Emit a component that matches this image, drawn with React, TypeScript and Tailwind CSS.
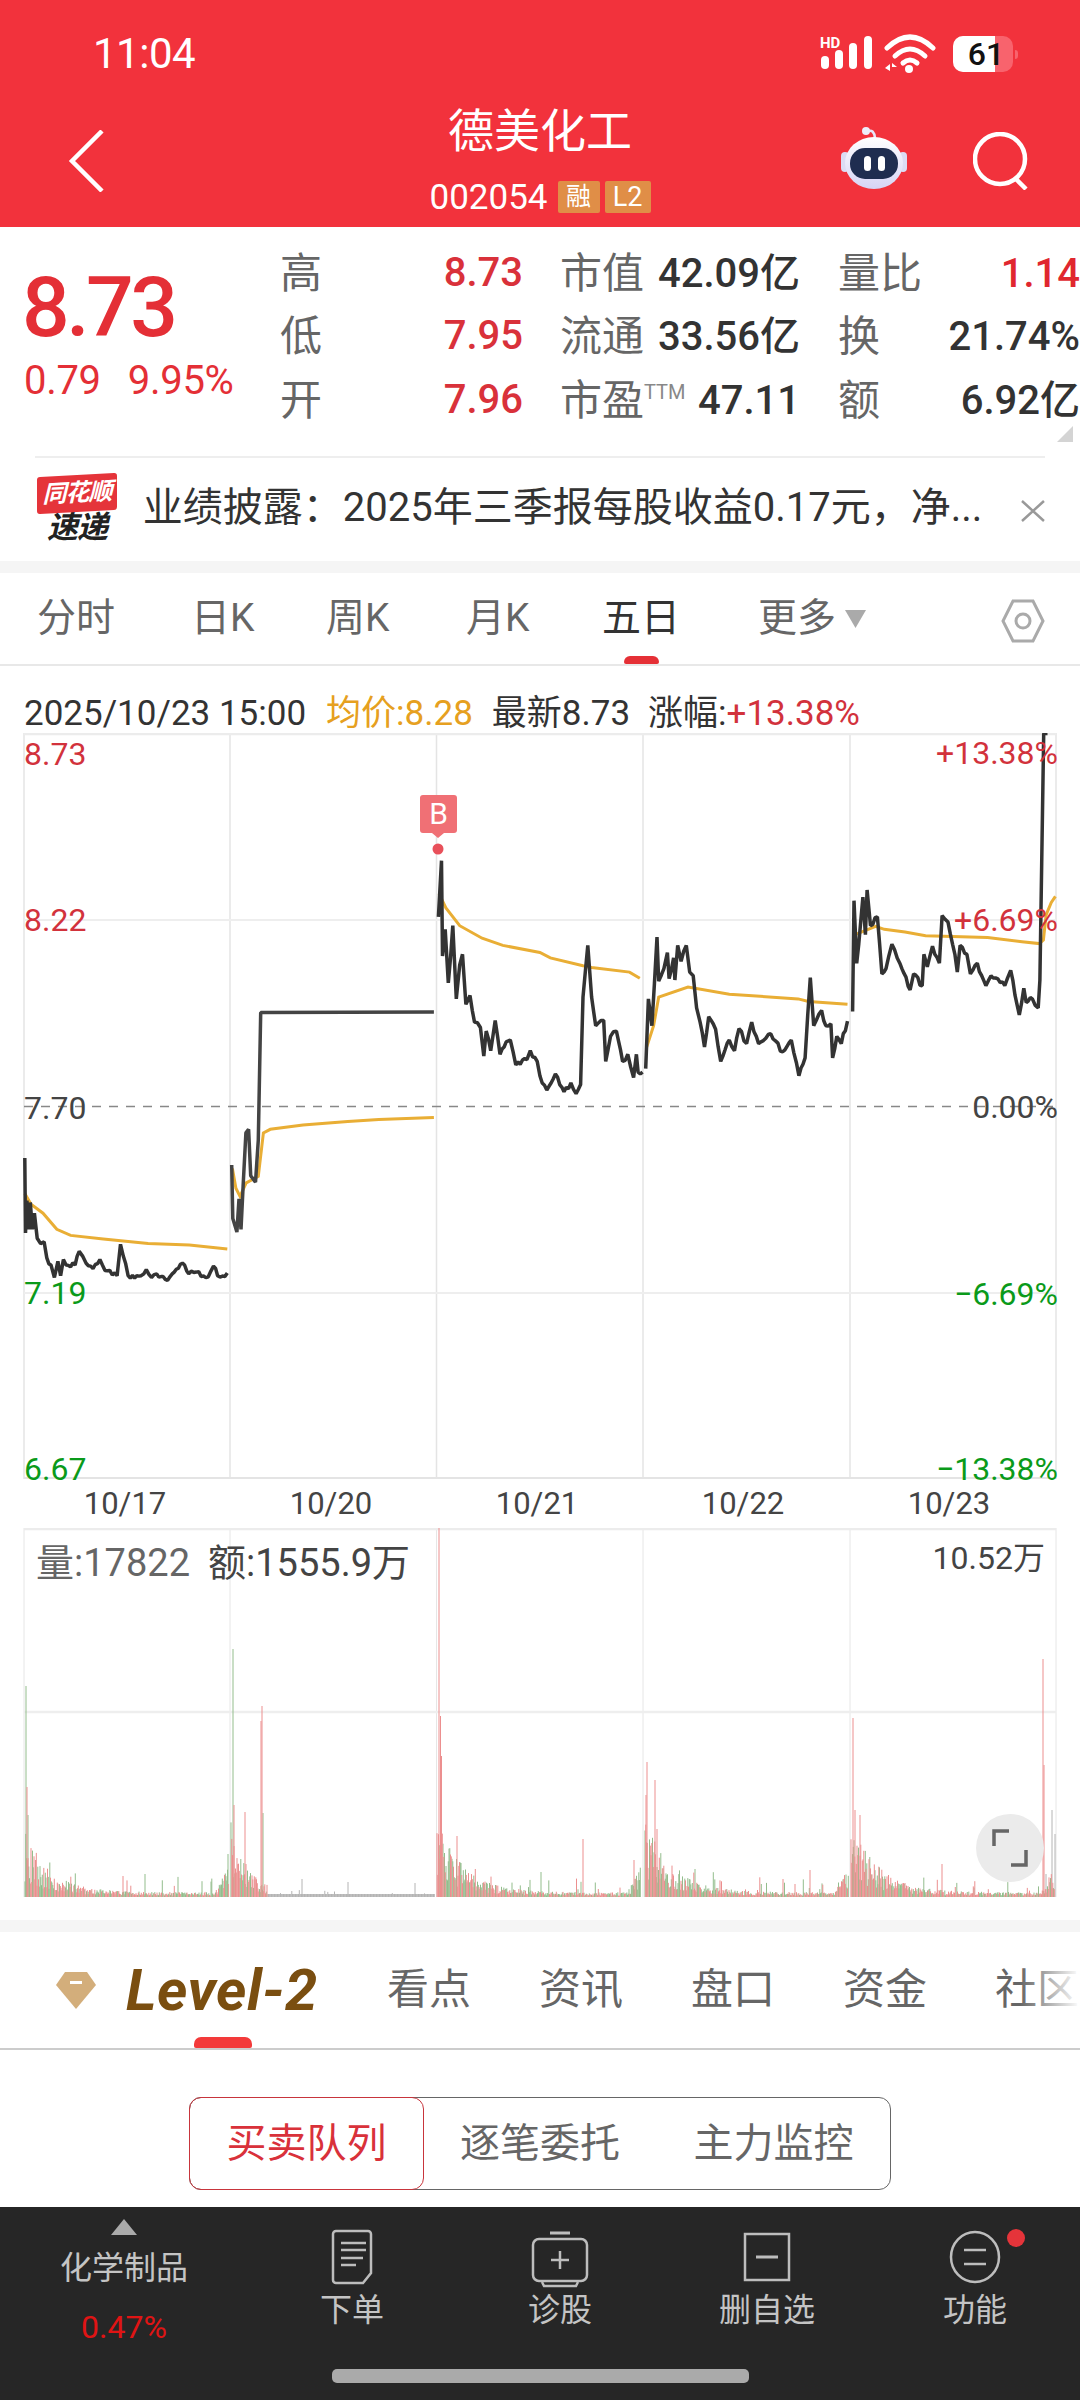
import React from "react";

// Price traces, traced from the chart (trace x / 2.904, 7 + y / 2.8 gives chart px)
const priceDays: number[][][] = [
  [[72,1170],[74,1380],[78,1290],[84,1370],[88,1295],[94,1370],[100,1325],[108,1395],[118,1410],[128,1405],[136,1450],[148,1470],[158,1505],[168,1460],[176,1500],[184,1455],[192,1470],[218,1470],[230,1432],[240,1445],[250,1465],[270,1480],[290,1455],[305,1485],[340,1500],[350,1412],[358,1445],[372,1500],[410,1500],[425,1483],[440,1505],[455,1495],[480,1510],[500,1495],[530,1465],[548,1495],[570,1490],[605,1503],[620,1473],[632,1500],[660,1492]],
  [[673,1190],[676,1340],[688,1378],[694,1285],[700,1370],[706,1250],[714,1100],[722,1090],[728,1220],[742,1238],[750,1120],[757,763],[1260,762]],
  [[1273,495],[1282,338],[1285,605],[1293,530],[1302,680],[1315,520],[1325,725],[1335,630],[1343,600],[1353,740],[1365,715],[1378,790],[1395,805],[1405,885],[1412,815],[1425,870],[1438,785],[1452,880],[1470,845],[1482,840],[1498,910],[1530,895],[1540,870],[1560,900],[1568,940],[1588,980],[1613,935],[1638,985],[1658,960],[1673,990],[1686,965],[1693,720],[1707,575],[1718,720],[1730,800],[1753,785],[1759,900],[1773,830],[1790,815],[1808,900],[1823,880],[1840,945],[1848,880],[1853,930],[1866,930]],
  [[1875,920],[1883,725],[1893,800],[1908,552],[1913,675],[1928,640],[1938,595],[1943,668],[1956,610],[1960,672],[1968,575],[1978,620],[1993,575],[2003,650],[2013,660],[2023,750],[2033,790],[2046,860],[2058,775],[2078,810],[2093,900],[2118,840],[2133,870],[2146,808],[2168,850],[2183,790],[2203,850],[2238,822],[2273,873],[2298,840],[2320,940],[2338,890],[2353,665],[2363,800],[2386,757],[2398,800],[2413,795],[2418,890],[2430,830],[2443,850],[2461,787]],
  [[2476,760],[2480,450],[2488,625],[2506,440],[2513,545],[2518,420],[2528,520],[2548,495],[2561,655],[2573,640],[2590,572],[2613,625],[2643,700],[2653,655],[2678,688],[2683,600],[2693,635],[2708,577],[2728,625],[2736,492],[2753,510],[2773,600],[2780,650],[2788,575],[2808,600],[2818,655],[2838,625],[2863,688],[2878,660],[2918,688],[2935,645],[2960,770],[2973,695],[2980,735],[2998,725],[3015,750],[3020,672],[3031,-18],[3042,-18]],
];

const avgDays: number[][][] = [
  [[72,1270],[90,1300],[125,1325],[165,1370],[205,1387],[300,1397],[430,1410],[550,1414],[660,1425]],
  [[675,1200],[685,1255],[697,1278],[715,1240],[750,1222],[765,1100],[785,1090],[880,1078],[1010,1068],[1100,1063],[1260,1057]],
  [[1275,430],[1295,470],[1335,520],[1400,555],[1460,575],[1568,595],[1598,610],[1693,632],[1718,637],[1828,650],[1858,667]],
  [[1878,860],[1898,800],[1913,720],[1998,692],[2118,712],[2318,725],[2348,732],[2461,740]],
  [[2483,545],[2543,522],[2568,530],[2628,538],[2688,548],[2868,553],[2968,565],[3018,570],[3030,560],[3038,490],[3053,455],[3065,438]],
];

const toPoints = (pts: number[][]) =>
  pts.map(([x, y]) => `${(x / 2.904).toFixed(1)},${(7 + y / 2.8).toFixed(1)}`).join(" ");

// Fills the long runs of a trace with minute-to-minute wiggle; steep or flat-limit runs stay straight
function roughen(pts: number[][]) {
  let seed = 91;
  const out: number[][] = [];
  pts.forEach(([x, y], i) => {
    out.push([x, y]);
    const next = pts[i + 1];
    if (!next || next[0] - x < 12 || next[0] - x > 200) return;
    const steps = Math.floor((next[0] - x) / 6);
    for (let s = 1; s < steps; s++) {
      seed = (seed * 16807) % 2147483647;
      const t = s / steps;
      out.push([x + (next[0] - x) * t, y + (next[1] - y) * t + ((seed % 17) - 8)]);
    }
  });
  return out;
}

// Volume bars: noise per minute plus the spikes read off the picture
function buildVolume() {
  let seed = 17;
  const rnd = () => {
    seed = (seed * 16807) % 2147483647;
    return seed / 2147483647;
  };
  const paths: Record<string, string> = { r: "", g: "", k: "" };
  const bar = (x: number, h: number, c: string) => {
    paths[c] += `M${x.toFixed(1)} 369V${(369 - h).toFixed(1)}`;
  };
  const starts = [25, 231, 437, 645, 851];
  const peak = [48, 62, 62, 62, 62];
  starts.forEach((s, i) => {
    for (let d = 0; d < 204; d += 0.75) {
      const x = s + d;
      if (i === 1 && d > 36) {
        bar(x, 3 + (rnd() < 0.03 ? rnd() * 6 : 0), "k");
        continue;
      }
      let env = peak[i] * Math.exp(-d / (i === 1 ? 16 : 26)) + 4;
      if (d > 190) env += (d - 190) * 1.6;
      let h = env * (0.3 + rnd() * 0.9);
      if (rnd() < 0.06) h += rnd() * 16;
      bar(x, h, rnd() < 0.5 ? "r" : "g");
    }
  });
  const spikes: [number, number, string][] = [
    [26,1686,"g"],[27,1787,"r"],[28,1815,"g"],[233,1649,"g"],[234,1805,"r"],[228,1854,"g"],[245,1812,"r"],[262,1706,"r"],[261,1721,"r"],[263,1813,"g"],
    [439,1528,"r"],[440.5,1716,"r"],[441.5,1756,"r"],[457,1836,"r"],[541,1872,"g"],[583,1839,"r"],[634,1860,"r"],[647,1762,"r"],[646,1795,"r"],[655,1780,"r"],
    [657,1829,"r"],[695,1869,"g"],[810,1870,"r"],[853,1718,"r"],[855,1810,"r"],[860,1815,"r"],[905,1883,"r"],[942,1864,"r"],[1043,1659,"r"],[1044,1765,"r"],
    [1052,1810,"k"],[1055,1834,"k"],[1046,1874,"k"],[145,1874,"g"],[123,1876,"r"],[302,1879,"k"],[348,1882,"k"],[415,1883,"k"],
  ];
  spikes.forEach(([x, top, c]) => bar(x, 1897 - top, c));
  return paths;
}
const volume = buildVolume();

function StatusBar() {
  return (
    <div className="h-[80px] pt-[28px] flex items-center justify-between pl-[93px] pr-[62px] text-white">
      <span className="text-[42px] leading-none tracking-[-0.5px]">11:04</span>
      <div className="flex items-center">
        <svg width="132" height="40" viewBox="819 36 132 40" fill="white">
          <text x="819" y="50" fontSize="15" fontWeight="700" fontFamily="Roboto">HD</text>
          <rect x="820" y="58" width="8" height="13" rx="4" />
          <rect x="834" y="52" width="8" height="19" rx="4" />
          <rect x="848" y="45" width="8" height="26" rx="4" />
          <rect x="863" y="38" width="8" height="33" rx="4" />
          <g fill="none" stroke="white" strokeWidth="5" strokeLinecap="round">
            <path d="M886 50 Q909 28 932 50" />
            <path d="M894 58 Q909 44 924 58" />
            <path d="M902 65 Q909 59 916 65" />
          </g>
          <circle cx="908" cy="71" r="4" />
          <path d="M884 70l5-4v7zM891 65l5 4h-5z" />
        </svg>
        <div className="relative w-[60px] h-[36px] ml-[1px] rounded-[10px] overflow-hidden bg-[#f8636d]">
          <div className="h-full w-[42px] bg-white" />
          <span className="absolute inset-0 flex items-center justify-center pl-[6px] text-[32px] font-medium text-[#111] leading-none">61</span>
        </div>
        <div className="w-[3px] h-[9px] ml-[2px] rounded-r bg-[#f8636d]" />
      </div>
    </div>
  );
}

function RobotIcon() {
  return (
    <svg width="66" height="64" viewBox="0 0 66 64">
      <defs>
        <linearGradient id="shell" x1="0" y1="0" x2="0" y2="1">
          <stop offset="0" stopColor="#ffffff" />
          <stop offset="1" stopColor="#d6d4f5" />
        </linearGradient>
      </defs>
      <path d="M27 5 Q33 3 34 12" fill="none" stroke="#e8e6f8" strokeWidth="2.5" />
      <circle cx="25" cy="5" r="4" fill="#eeeefa" />
      <rect x="0" y="26" width="8" height="20" rx="4" fill="#dcdcf4" />
      <rect x="58" y="26" width="8" height="20" rx="4" fill="#dcdcf4" />
      <ellipse cx="33" cy="37" rx="29" ry="26" fill="url(#shell)" />
      <rect x="9" y="22" width="48" height="31" rx="15" fill="#1f2d50" />
      <rect x="23" y="30" width="7" height="15" rx="3.5" fill="#ffffff" />
      <rect x="37" y="30" width="7" height="15" rx="3.5" fill="#ffffff" />
    </svg>
  );
}

function Header() {
  return (
    <div className="bg-[#f2323c] h-[227px] flex flex-col">
      <StatusBar />
      <div className="flex flex-1 text-white">
        <div className="w-[300px] pl-[68px] pt-[50px]">
          <svg width="38" height="62" viewBox="0 0 38 62" fill="none" stroke="white" strokeWidth="4.5">
            <path d="M34 1 L4 31 L34 61" />
          </svg>
        </div>
        <div className="flex-1 flex flex-col items-center">
          <div className="mt-[25px] text-[46px] leading-[52px]">德美化工</div>
          <div className="mt-[24px] flex items-center h-[32px]">
            <span className="text-[35px] leading-none">002054</span>
            <span className="ml-[10px] w-[42px] h-[32px] rounded-[2px] bg-[#e08e47] text-[25px] leading-[32px] text-center">融</span>
            <span className="ml-[5px] w-[46px] h-[32px] rounded-[2px] bg-[#e08e47] text-[27px] leading-[32px] text-center">L2</span>
          </div>
        </div>
        <div className="w-[300px] pt-[46px] pr-[51px] flex justify-end gap-[66px]">
          <RobotIcon />
          <svg width="56" height="58" viewBox="0 0 56 58" fill="none" stroke="white" strokeWidth="4.5" className="mt-[6px]">
            <circle cx="27" cy="27" r="25" />
            <path d="M42 46 L53 57" />
          </svg>
        </div>
      </div>
    </div>
  );
}

const statRows = [
  { a: "高", av: "8.73", b: "市值", bv: "42.09亿", c: "量比", cv: "1.14", cc: "text-[#e0272f]" },
  { a: "低", av: "7.95", b: "流通", bv: "33.56亿", c: "换", cv: "21.74%", cc: "text-[#333]" },
  { a: "开", av: "7.96", b: "市盈", bv: "47.11", c: "额", cv: "6.92亿", cc: "text-[#333]" },
];

function Stats() {
  return (
    <div className="relative h-[229px] flex bg-white">
      <div className="w-[280px] pl-[22px] text-[#e42f36]">
        <div className="mt-[39px] text-[84px] font-medium leading-[84px] tracking-[-3.5px]">8.73</div>
        <div className="mt-[10px] ml-[2px] flex gap-[27px] text-[40px] leading-[42px] tracking-[-0.3px]">
          <span>0.79</span>
          <span>9.95%</span>
        </div>
      </div>
      <div className="pt-[15px]">
        {statRows.map((r) => (
          <div key={r.a} className="flex h-[63.5px] items-center text-[40px] font-medium leading-none">
            <div className="w-[243px] flex justify-between">
              <span className="text-[42px] font-normal text-[#666]">{r.a}</span>
              <span className="text-[#d9313a]">{r.av}</span>
            </div>
            <div className="ml-[37px] w-[240px] flex justify-between items-center">
              <span className="relative text-[42px] font-normal text-[#666]">
                {r.b}
                {r.b === "市盈" && <span className="absolute left-full top-[2px] text-[20px] text-[#888]">TTM</span>}
              </span>
              <span className="text-[#333]">{r.bv}</span>
            </div>
            <div className="ml-[38px] w-[242px] flex justify-between items-center">
              <span className="text-[42px] font-normal text-[#666]">{r.c}</span>
              <span className={r.cc}>{r.cv}</span>
            </div>
          </div>
        ))}
      </div>
      <svg className="absolute right-[7px] bottom-[14px]" width="16" height="16" viewBox="0 0 16 16">
        <path d="M16 0V16H0Z" fill="#d4d4d4" />
      </svg>
    </div>
  );
}

function Notice() {
  return (
    <div className="h-[105px] bg-white px-[35px]">
      <div className="h-[2px] bg-[#eeeeee]" />
      <div className="flex items-start pt-[17px]">
        <div className="w-[84px] flex flex-col items-center">
          <div className="relative w-[80px] h-[37px] rounded-[3px] bg-[#e5343a] -skew-y-3 text-center text-white text-[24px] font-bold italic leading-[36px] tracking-[-1px]">
            同花顺
          </div>
          <div className="mt-[1px] text-[31px] font-bold italic leading-[30px] text-[#222] tracking-[-1px]">速递</div>
        </div>
        <div className="ml-[24px] w-[842px] mt-[10px] text-[40px] leading-[46px] text-[#333] whitespace-nowrap">
          业绩披露：2025年三季报每股收益0.17元，净...
        </div>
        <svg className="ml-[38px] mt-[25px]" width="24" height="22" viewBox="0 0 24 22" stroke="#999" strokeWidth="2.5">
          <path d="M1 1L23 21M23 1L1 21" />
        </svg>
      </div>
    </div>
  );
}

const periodTabs = [
  { t: "分时", w: "w-[154px]" },
  { t: "日K", w: "w-[135px]" },
  { t: "周K", w: "w-[140px]" },
  { t: "月K", w: "w-[136px]" },
  { t: "五日", w: "w-[156px]" },
];

function PeriodTabs() {
  return (
    <div className="relative h-[93px] bg-white border-b-2 border-[#e8e8e8] flex items-center pl-[37px] text-[39px] text-[#666] leading-none">
      {periodTabs.map((p) => (
        <span key={p.t} className={`${p.w} ${p.t === "五日" ? "text-[#333]" : ""}`}>
          {p.t}
        </span>
      ))}
      <span>更多</span>
      <svg className="ml-[9px]" width="21" height="18" viewBox="0 0 21 18">
        <path d="M0 0H21L10.5 18Z" fill="#aaa" />
      </svg>
      <svg className="absolute left-[1001px] top-[26px]" width="44" height="44" viewBox="0 0 44 44" fill="none" stroke="#aaa" strokeWidth="3">
        <path d="M12 2H32L42 22L32 42H12L2 22Z" />
        <circle cx="22" cy="22" r="7" />
      </svg>
      <div className="absolute left-[624px] bottom-0 w-[35px] h-[8px] rounded-t-[6px] rounded-b-[2px] bg-[#e53036]" />
    </div>
  );
}

const priceLabels = [
  { t: "8.73", c: "left-[24px] top-[21px] text-[#d2323c]" },
  { t: "8.22", c: "left-[24px] top-[187px] text-[#d2323c]" },
  { t: "7.70", c: "left-[24px] top-[375px] text-[#444]" },
  { t: "7.19", c: "left-[24px] top-[560px] text-[#0a9a1a]" },
  { t: "6.67", c: "left-[24px] top-[736px] text-[#0a9a1a]" },
  { t: "+13.38%", c: "right-[22px] top-[20px] text-[#d2323c]" },
  { t: "+6.69%", c: "right-[22px] top-[187px] text-[#d2323c]" },
  { t: "0.00%", c: "right-[22px] top-[374px] text-[#444]" },
  { t: "−6.69%", c: "right-[22px] top-[561px] text-[#0a9a1a]" },
  { t: "−13.38%", c: "right-[22px] top-[736px] text-[#0a9a1a]" },
];

const gridX = [24, 230, 436.5, 643, 850, 1056];

function PriceChart() {
  return (
    <div className="relative h-[746px]">
      <svg className="absolute inset-0" width="1080" height="746" viewBox="0 0 1080 746">
        {gridX.map((x) => (
          <line key={x} x1={x} x2={x} y1="0" y2="746" stroke="#e4e4e4" strokeWidth="1.5" />
        ))}
        <line x1="24" x2="1056" y1="1" y2="1" stroke="#ececec" strokeWidth="2.5" />
        <line x1="24" x2="1056" y1="187" y2="187" stroke="#eeeeee" strokeWidth="2" />
        <line x1="24" x2="1056" y1="373.5" y2="373.5" stroke="#888" strokeWidth="1.5" strokeDasharray="9 8" />
        <line x1="24" x2="1056" y1="560" y2="560" stroke="#eeeeee" strokeWidth="2" />
        <line x1="24" x2="1056" y1="745" y2="745" stroke="#e4e4e4" strokeWidth="2" />
        {avgDays.map((d, i) => (
          <polyline key={i} points={toPoints(d)} fill="none" stroke="#e9ae35" strokeWidth="3" />
        ))}
        {priceDays.map((d, i) => (
          <polyline key={i} points={toPoints(i === 1 ? d : roughen(d))} fill="none" stroke={i === 1 ? "#444" : "#333"} strokeWidth="3.5" strokeLinejoin="bevel" />
        ))}
        <path d="M423 62H454a3 3 0 0 1 3 3V97a3 3 0 0 1 -3 3H444L438 105L432 100H423a3 3 0 0 1 -3 -3V65a3 3 0 0 1 3 -3Z" fill="#f07075" />
        <circle cx="438" cy="116" r="5.5" fill="#e8505a" />
      </svg>
      {priceLabels.map((l) => (
        <span key={l.t} className={`absolute -translate-y-1/2 text-[32px] leading-none ${l.c}`}>
          {l.t}
        </span>
      ))}
      <span className="absolute left-[420px] top-[62px] w-[37px] h-[38px] text-center text-white text-[30px] leading-[38px]">B</span>
    </div>
  );
}

function VolumeChart() {
  return (
    <div className="relative h-[375px]">
      <svg className="absolute inset-0" width="1080" height="375" viewBox="0 0 1080 375">
        {gridX.map((x) => (
          <line key={x} x1={x} x2={x} y1="0" y2="369" stroke="#e6e6e6" strokeWidth="1" />
        ))}
        <line x1="24" x2="1056" y1="1" y2="1" stroke="#ececec" strokeWidth="2.5" />
        <line x1="24" x2="1056" y1="184" y2="184" stroke="#eeeeee" strokeWidth="2.5" />
        <path d={volume.k} stroke="#b4b4b4" strokeWidth="1" fill="none" />
        <path d={volume.g} stroke="#93bd8c" strokeWidth="1" fill="none" />
        <path d={volume.r} stroke="#ec8f8f" strokeWidth="1" fill="none" />
      </svg>
      <div className="absolute left-[36px] top-[15px] flex gap-[18px] text-[38px] leading-[40px]">
        <span className="text-[#666]">量:17822</span>
        <span className="text-[#444]">额:1555.9万</span>
      </div>
      <span className="absolute right-[35px] top-[13px] text-[32px] leading-[34px] text-[#444]">10.52万</span>
      <div className="absolute left-[976px] top-[286px] w-[68px] h-[68px] rounded-full bg-[#ebebeb] flex items-center justify-center">
        <svg width="36" height="38" viewBox="0 0 36 38" fill="none" stroke="#666" strokeWidth="3.5">
          <path d="M2 17V2H17M34 21V36H19" />
        </svg>
      </div>
    </div>
  );
}

function ChartPanel() {
  return (
    <div className="bg-white h-[1254px]">
      <div className="h-[67px] pl-[24px] pt-[28px] flex text-[35px] leading-[40px] text-[#333] whitespace-nowrap">
        <span>2025/10/23 15:00</span>
        <span className="ml-[20px] text-[#e6a020]">均价:8.28</span>
        <span className="ml-[19px]">最新8.73</span>
        <span className="ml-[18px]">涨幅:</span>
        <span className="text-[#d2323c]">+13.38%</span>
      </div>
      <PriceChart />
      <div className="h-[49px] pl-[22px] flex items-center text-[31px] text-[#444] leading-none">
        {["10/17", "10/20", "10/21", "10/22", "10/23"].map((d) => (
          <span key={d} className="w-[206px] text-center">
            {d}
          </span>
        ))}
      </div>
      <VolumeChart />
    </div>
  );
}

function Level2Tabs() {
  return (
    <div className="relative h-[118px] bg-white border-b-2 border-[#cccccc] flex items-center overflow-hidden">
      <div className="w-[387px] shrink-0 pl-[56px] flex items-center">
        <svg width="40" height="38" viewBox="0 0 40 38">
          <path d="M9 1H31L40 14L20 38L0 14Z" fill="#d3ae7b" />
          <rect x="14" y="10" width="12" height="3" fill="#fff" />
        </svg>
        <span className="ml-[30px] text-[58px] font-bold italic leading-none text-[#7a4e10] tracking-[0.5px]">Level-2</span>
      </div>
      {["看点", "资讯", "盘口", "资金", "社区"].map((t) => (
        <span key={t} className="w-[152px] shrink-0 text-[42px] leading-none text-[#666]">
          {t}
        </span>
      ))}
      <div className="absolute right-0 inset-y-0 w-[60px] bg-gradient-to-r from-transparent to-white" />
      <div className="absolute left-[194px] bottom-0 w-[58px] h-[11px] rounded-t-[7px] rounded-b-[2px] bg-[#f33a3a]" />
    </div>
  );
}

function Segments() {
  return (
    <div className="h-[157px] bg-white pt-[47px] pl-[189px]">
      <div className="w-[702px] h-[93px] flex rounded-[12px] border border-[#666] text-[40px] leading-none text-[#666]">
        <div className="w-[235px] -m-px rounded-[12px] border border-[#c8353c] flex items-center justify-center text-[#d9313a]">买卖队列</div>
        <div className="w-[234px] flex items-center justify-center">逐笔委托</div>
        <div className="flex-1 flex items-center justify-center">主力监控</div>
      </div>
    </div>
  );
}

const iconStroke = { fill: "none", stroke: "#bdbdbd", strokeWidth: 2.5 };

function BottomBar() {
  return (
    <div className="h-[193px] bg-[#262626]">
      <div className="h-[162px] flex text-[#c4c4c4] text-[32px] leading-[40px]">
        <div className="w-[248px] flex flex-col items-center pt-[12px]">
          <svg width="26" height="16" viewBox="0 0 26 16">
            <path d="M13 0L26 16H0Z" fill="#aaa" />
          </svg>
          <div className="mt-[13px]">化学制品</div>
          <div className="mt-[19px] text-[#e01414]">0.47%</div>
        </div>
        <div className="w-[208px] flex flex-col items-center pt-[20px]">
          <svg width="64" height="63" viewBox="0 0 64 63" {...iconStroke}>
            <path d="M16 4H48a3 3 0 0 1 3 3V46L43 56H16a3 3 0 0 1 -3 -3V7a3 3 0 0 1 3 -3Z" />
            <path d="M21 16H46M21 23H46M21 31H43M21 38H36" />
          </svg>
          <div>下单</div>
        </div>
        <div className="w-[208px] flex flex-col items-center pt-[20px]">
          <svg width="64" height="63" viewBox="0 0 64 63" {...iconStroke}>
            <path d="M22 6H42" strokeWidth="3" />
            <rect x="5" y="12" width="54" height="42" rx="6" />
            <path d="M32 24V42M23 33H41M14 55L16 59H48L50 55" />
          </svg>
          <div>诊股</div>
        </div>
        <div className="w-[206px] flex flex-col items-center pt-[20px]">
          <svg width="64" height="63" viewBox="0 0 64 63" {...iconStroke}>
            <rect x="10" y="7" width="44" height="46" />
            <path d="M21 30H43" strokeWidth="3" />
          </svg>
          <div>删自选</div>
        </div>
        <div className="relative flex-1 flex flex-col items-center pt-[20px]">
          <svg width="64" height="63" viewBox="0 0 64 63" {...iconStroke}>
            <ellipse cx="32" cy="30" rx="24" ry="25" />
            <path d="M21 23H43M21 37H43" />
          </svg>
          <div>功能</div>
          <div className="absolute left-[137px] top-[22px] w-[18px] h-[18px] rounded-full bg-[#e5343a]" />
        </div>
      </div>
      <div className="mx-auto w-[417px] h-[14px] rounded-[5px] bg-[#aaaaaa]" />
    </div>
  );
}

export default function App() {
  return (
    <div className="w-[1080px] h-[2400px] overflow-hidden bg-white font-[Roboto,'Noto_Sans_CJK_SC',sans-serif]">
      <Header />
      <Stats />
      <Notice />
      <div className="h-[12px] bg-[#f5f5f5]" />
      <PeriodTabs />
      <ChartPanel />
      <div className="h-[12px] bg-[#f5f5f5]" />
      <Level2Tabs />
      <Segments />
      <BottomBar />
    </div>
  );
}
